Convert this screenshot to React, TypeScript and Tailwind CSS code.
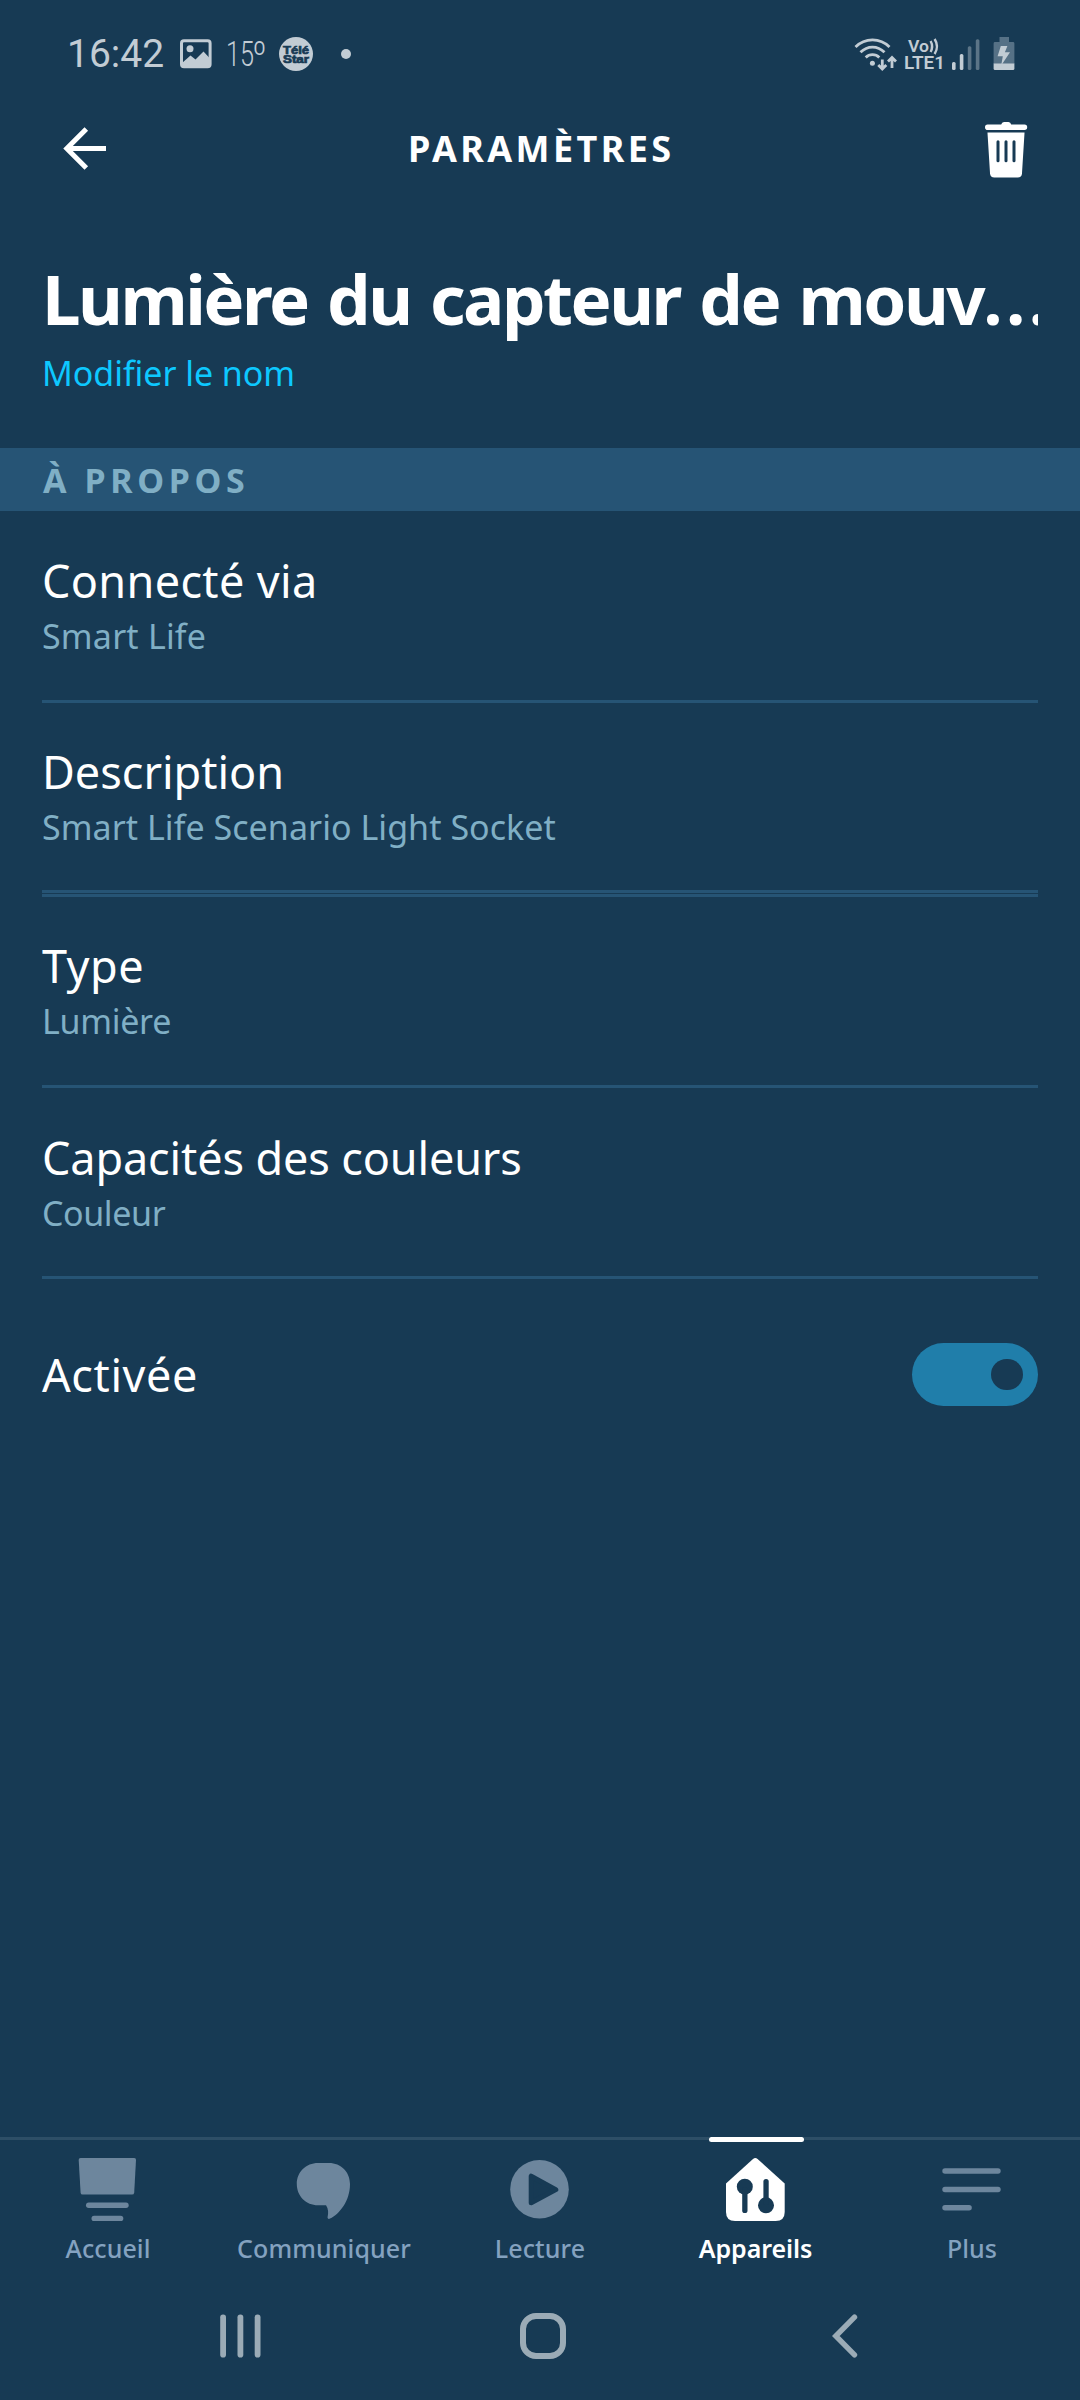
import React, { useState } from 'react';
import * as Switch from '@radix-ui/react-switch';

const details = [
  {
    label: 'Connecté via',
    value: 'Smart Life',
    row: 'h-[192px] pb-[42px] border-b-[3px]',
    labelTracking: 'tracking-[0.35px]',
    valueTracking: 'tracking-[0.2px]',
  },
  {
    label: 'Description',
    value: 'Smart Life Scenario Light Socket',
    row: 'h-[190px] pb-[41px] border-b-[3px]',
    labelTracking: 'tracking-[0px]',
    valueTracking: 'tracking-[0.05px]',
  },
  {
    label: 'Type',
    value: 'Lumière',
    row: 'mt-px h-[194px] pb-[42px] border-t-[3px] border-b-[3px]',
    labelTracking: 'tracking-[0.5px]',
    valueTracking: 'tracking-[-0.3px]',
  },
  {
    label: 'Capacités des couleurs',
    value: 'Couleur',
    row: 'h-[191px] pb-[41px] border-b-[3px]',
    labelTracking: 'tracking-[-0.13px]',
    valueTracking: 'tracking-[-0.4px]',
  },
];

function HomeIcon() {
  return (
    <svg viewBox="0 0 64 64" className="w-16 h-16" fill="currentColor">
      <path d="M4.5 1H58.2Q60.1 1 60 3L58.2 35.7Q58 37.6 56 37.6H6.6Q4.8 37.6 4.6 35.7L2.7 3Q2.6 1 4.5 1Z" />
      <rect x="10" y="45.5" width="42.7" height="5.5" rx="2.7" />
      <rect x="15.5" y="58.7" width="31.8" height="5.3" rx="2.6" />
    </svg>
  );
}

function ChatIcon() {
  return (
    <svg viewBox="0 0 64 64" className="w-16 h-16" fill="currentColor">
      <path d="M26 6H37C49 6 58 15 58 27C58 44 47.5 57 38 61.6C36.5 62.4 35.3 61.5 35.6 60C36.5 56 36.5 52 34 48.3H26C14 48.3 4.8 39 4.8 27S14 6 26 6Z" />
    </svg>
  );
}

function PlayIcon() {
  return (
    <svg viewBox="0 0 64 64" className="w-16 h-16">
      <circle cx="31.5" cy="32.3" r="29.3" fill="currentColor" />
      <path
        d="M23.2 19.2V45.8L47.8 32.6Z"
        fill="#173a54"
        stroke="#173a54"
        strokeWidth="5"
        strokeLinejoin="round"
      />
    </svg>
  );
}

function DevicesIcon() {
  return (
    <svg viewBox="0 0 64 64" className="w-16 h-16">
      <path
        d="M29 2Q31.3 0 33.6 2L60.7 26.5V55Q60.7 64 51.7 64H11Q2 64 2 55V26.5Z"
        fill="currentColor"
      />
      <g fill="#173a54">
        <circle cx="20.8" cy="29.7" r="8" />
        <rect x="18.2" y="30" width="5.3" height="26" rx="2.6" />
        <circle cx="42" cy="48.3" r="8" />
        <rect x="39.4" y="22" width="5.3" height="26" rx="2.6" />
      </g>
    </svg>
  );
}

function MoreIcon() {
  return (
    <svg viewBox="0 0 64 64" className="w-16 h-16" fill="currentColor">
      <rect x="2.3" y="11.3" width="58.4" height="5.5" rx="2.7" />
      <rect x="2.3" y="29.7" width="58.4" height="5.5" rx="2.7" />
      <rect x="2.3" y="48" width="29.5" height="5.5" rx="2.7" />
    </svg>
  );
}

const tabs = [
  { name: 'Accueil', icon: <HomeIcon /> },
  { name: 'Communiquer', icon: <ChatIcon /> },
  { name: 'Lecture', icon: <PlayIcon /> },
  { name: 'Appareils', icon: <DevicesIcon /> },
  { name: 'Plus', icon: <MoreIcon /> },
];

function StatusBar() {
  return (
    <div className="flex items-center h-[106px] pt-px pl-[67px] pr-[65px] font-['Roboto',sans-serif] text-[#c2ccd4]">
      <span className="w-[113px] pt-px text-[39px] leading-[46px]">16:42</span>
      <svg viewBox="0 0 32 30" className="w-8 h-[30px]">
        <rect x="1.5" y="1.8" width="28.6" height="26" rx="2.5" fill="none" stroke="currentColor" strokeWidth="3" />
        <circle cx="10" cy="9.8" r="3.5" fill="currentColor" />
        <path d="M2 24L10.5 16.5L15.5 20.5L23.5 12.5L30 19.5V28H2Z" fill="currentColor" />
      </svg>
      <svg viewBox="0 0 42 46" className="w-[42px] h-[46px] ml-[14px]" fill="currentColor">
        <text x="0" y="35.3" fontSize="34.5" fontWeight="300" textLength="28" lengthAdjust="spacingAndGlyphs">
          15
        </text>
        <text x="26.5" y="35.3" fontSize="34.5" fontWeight="300" textLength="14" lengthAdjust="spacingAndGlyphs">
          º
        </text>
      </svg>
      <svg viewBox="0 0 34 34" className="w-[34px] h-[34px] ml-[11px]">
        <circle cx="17" cy="17" r="17" fill="currentColor" />
        <g fill="#173a54" stroke="#173a54" strokeWidth="0.7" fontFamily="Liberation Sans" fontWeight="700">
          <text x="4" y="16.8" fontSize="11" textLength="26" lengthAdjust="spacingAndGlyphs">Télé</text>
          <text x="4" y="25.6" fontSize="10" textLength="26" lengthAdjust="spacingAndGlyphs">Star</text>
        </g>
      </svg>
      <span className="w-[10px] h-[10px] ml-7 rounded-full bg-[#c2ccd4]" />

      <div className="flex items-center ml-auto">
        <svg viewBox="0 0 48 36" className="w-12 h-9" fill="none" stroke="currentColor" strokeWidth="2.8">
          <path d="M3.5 11C13 1.5 28 1.5 37.5 11" />
          <path d="M8.5 16.3C15.5 9.3 25.5 9.3 32.5 16.3" />
          <path d="M13.7 21.5C17.5 17.7 23.5 17.7 27.3 21.5" />
          <circle cx="20.4" cy="27.3" r="2.5" fill="currentColor" stroke="none" />
          <path d="M30.3 23.5V32.5M26.3 29L30.3 33L34.3 29" />
          <path d="M40 32V22M36 25.5L40 21.5L44 25.5" />
        </svg>
        <svg viewBox="0 -6 46 48" className="w-[46px] h-12 ml-[3px]" fill="currentColor">
          <text x="5" y="15.6" fontSize="17" fontWeight="600" textLength="21" lengthAdjust="spacingAndGlyphs">Vo</text>
          <text x="1" y="33.4" fontSize="18" fontWeight="600" textLength="41" lengthAdjust="spacingAndGlyphs">LTE1</text>
          <path d="M27.6 5Q30.6 10.5 27.6 16M31.6 3Q36.4 10.5 31.6 18" fill="none" stroke="currentColor" strokeWidth="2.4" />
        </svg>
        <svg viewBox="0 0 32 36" className="w-8 h-9 ml-0.5" fill="currentColor">
          <rect x="1" y="26" width="3.6" height="8" rx="1.5" />
          <rect x="8.8" y="18" width="3.6" height="16" rx="1.5" />
          <rect x="16.8" y="10.3" width="3.6" height="23.7" rx="1.5" opacity="0.4" />
          <rect x="24.8" y="3.2" width="3.6" height="30.8" rx="1.5" opacity="0.4" />
        </svg>
        <svg viewBox="0 0 22 36" className="w-[22px] h-9 ml-[10px]">
          <path d="M6.5 1H16V6H20Q21.4 6 21.4 7.4V28H.6V7.4Q.6 6 2 6H6.5Z" fill="#567186" />
          <path d="M.6 27.6H21.4V32.4Q21.4 34 20 34H2Q.6 34 .6 32.4Z" fill="currentColor" />
          <path d="M7.8 10H14.4L11.9 16.3H17L8.2 29.5L9.8 20.3H4.6Z" fill="currentColor" />
        </svg>
      </div>
    </div>
  );
}

export default function App() {
  const [enabled, setEnabled] = useState(true);
  const [active, setActive] = useState('Appareils');

  return (
    <div className="flex flex-col w-[1080px] h-[2400px] overflow-hidden bg-[#173a54] font-['Noto_Sans',sans-serif] text-white">
      <StatusBar />

      <header className="flex items-center h-[84px] pl-[63px] pr-[52px] pt-[2px]">
        <button className="w-11">
          <svg viewBox="0 0 44 44" className="w-11 h-11" fill="none" stroke="currentColor" strokeWidth="5">
            <path d="M43 21.5H4M23.3 2L3.8 21.5L23.3 41" />
          </svg>
        </button>
        <h1 className="ml-[301px] text-[36px] leading-[50px] font-bold tracking-[3.4px]">PARAMÈTRES</h1>
        <button className="w-11 ml-auto pt-[2px]">
          <svg viewBox="0 0 44 56" className="w-11 h-14" fill="currentColor">
            <path d="M17.2 2.5Q17.8 0 20 0H24.5Q26.6 0 27.2 2.5H40.5Q43.2 2.5 43.2 5.2T40.5 8H3.8Q1 8 1 5.2T3.8 2.5Z" />
            <path d="M3.5 10.5H40.5L38 51.5Q37.7 55.5 33.7 55.5H10.3Q6.4 55.5 6 51.5Z" />
            <g fill="#173a54">
              <rect x="12.5" y="18.2" width="3" height="22" rx="1.5" />
              <rect x="20.5" y="18.2" width="3" height="22" rx="1.5" />
              <rect x="28.5" y="18.2" width="3" height="22" rx="1.5" />
            </g>
          </svg>
        </button>
      </header>

      <main className="flex-1">
        <div className="px-[42px] pt-[61px]">
          <h2 className="overflow-hidden whitespace-nowrap text-[69px] leading-[94px] font-bold tracking-[-2.5px] [word-spacing:4px]">
            Lumière du capteur de mouv<span className="tracking-[3.4px]">...</span>
          </h2>
          <a className="block mt-[6px] text-[34px] leading-[44px] tracking-[-0.05px] text-[#0dc8ff]">
            Modifier le nom
          </a>
        </div>

        <h3 className="flex items-center h-[63px] mt-[53px] pt-[2px] pl-[43px] bg-[#265475] text-[34px] font-bold tracking-[4.6px] text-[#80afc5]">
          À PROPOS
        </h3>

        <div className="px-[42px]">
          {details.map(d => (
            <div key={d.label} className={`flex flex-col justify-end border-[#265475] ${d.row}`}>
              <p className={`text-[45px] leading-[60px] ${d.labelTracking}`}>{d.label}</p>
              <p className={`mt-[3px] text-[34px] leading-[44px] text-[#80afc5] ${d.valueTracking}`}>{d.value}</p>
            </div>
          ))}

          {/* Enable toggle */}
          <label className="flex items-center justify-between mt-16">
            <span className="text-[45px] leading-[60px] tracking-[0.6px]">Activée</span>
            <Switch.Root
              checked={enabled}
              onCheckedChange={setEnabled}
              className="flex items-center w-[126px] h-[63px] px-[15px] rounded-full bg-[#3f5f78] data-[state=checked]:justify-end data-[state=checked]:bg-[#207eaa]"
            >
              <Switch.Thumb className="block w-[32px] h-[31px] rounded-full bg-[#173a54]" />
            </Switch.Root>
          </label>
        </div>
      </main>

      <nav className="grid grid-cols-5 h-[149px] border-t-[3px] border-[#2d4e66]">
        {tabs.map(tab => (
          <button
            key={tab.name}
            onClick={() => setActive(tab.name)}
            className={
              active === tab.name
                ? 'relative flex flex-col items-center pt-[17px] font-semibold text-white'
                : 'relative flex flex-col items-center pt-[17px] font-medium text-[#6d869d]'
            }
          >
            {active === tab.name && (
              <span className="absolute -top-[3px] left-[61px] w-[95px] h-[5px] rounded-full bg-white" />
            )}
            {tab.icon}
            <span
              className={
                active === tab.name
                  ? 'mt-[10px] pr-px text-[25px] leading-[34px] tracking-[-0.1px]'
                  : 'mt-[10px] text-[25px] leading-[34px] tracking-[0.1px] text-[#84a2c0]'
              }
            >
              {tab.name}
            </span>
          </button>
        ))}
      </nav>

      {/* Android buttons */}
      <div className="flex items-center h-[114px] pl-[219px] pr-[222px] pb-[15px] text-[#9babb6]">
        <svg viewBox="0 0 42 44" className="w-[42px] h-11" fill="currentColor">
          <rect x="1.2" y="0.5" width="5.8" height="43" rx="2.8" />
          <rect x="18.5" y="0.5" width="5.8" height="43" rx="2.8" />
          <rect x="35.7" y="0.5" width="5.8" height="43" rx="2.8" />
        </svg>
        <svg viewBox="0 0 48 48" className="w-12 h-12 ml-[258px]" fill="none" stroke="currentColor" strokeWidth="6">
          <rect x="4" y="4" width="40" height="40" rx="13" />
        </svg>
        <svg viewBox="0 0 26 44" className="w-[26px] h-11 ml-auto" fill="none" stroke="currentColor" strokeWidth="5.4" strokeLinecap="round">
          <path d="M22.5 3.2L3.8 22L22.5 40.8" />
        </svg>
      </div>
    </div>
  );
}
